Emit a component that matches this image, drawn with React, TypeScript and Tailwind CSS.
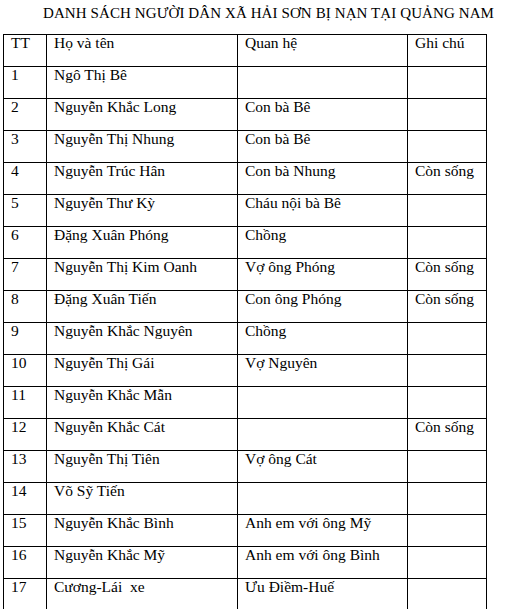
const rows: [string, string, string, string][] = [
  ['1', 'Ngô Thị Bê', '', ''],
  ['2', 'Nguyễn Khắc Long', 'Con bà Bê', ''],
  ['3', 'Nguyễn Thị Nhung', 'Con bà Bê', ''],
  ['4', 'Nguyễn Trúc Hân', 'Con bà Nhung', 'Còn sống'],
  ['5', 'Nguyễn Thư Kỳ', 'Cháu nội bà Bê', ''],
  ['6', 'Đặng Xuân Phóng', 'Chồng', ''],
  ['7', 'Nguyễn Thị Kim Oanh', 'Vợ ông Phóng', 'Còn sống'],
  ['8', 'Đặng Xuân Tiến', 'Con ông Phóng', 'Còn sống'],
  ['9', 'Nguyễn Khắc Nguyên', 'Chồng', ''],
  ['10', 'Nguyễn Thị Gái', 'Vợ Nguyên', ''],
  ['11', 'Nguyễn Khắc Mẫn', '', ''],
  ['12', 'Nguyễn Khắc Cát', '', 'Còn sống'],
  ['13', 'Nguyễn Thị Tiên', 'Vợ ông Cát', ''],
  ['14', 'Võ Sỹ Tiến', '', ''],
  ['15', 'Nguyễn Khắc Bình', 'Anh em với ông Mỹ', ''],
  ['16', 'Nguyễn Khắc Mỹ', 'Anh em với ông Bình', ''],
  ['17', 'Cương-Lái  xe', 'Ưu Điềm-Huế', ''],
]

const serif = "font-['Liberation_Serif',serif]"
const cell = `border border-black align-top px-[7px] pt-0 font-normal text-left whitespace-pre ${serif} text-[15.5px] leading-[16px]`

export default function App() {
  return (
    <div className={`w-[505px] h-[609px] bg-white text-black ${serif} overflow-hidden`}>
      <h1 className="pl-[43px] pt-[5px] h-[34px] text-[15px] leading-[16px] font-normal tracking-[0.1px]">
        DANH SÁCH NGƯỜI DÂN XÃ HẢI SƠN BỊ NẠN TẠI QUẢNG NAM
      </h1>
      <table className={`ml-[3px] border-collapse table-fixed w-[483px] ${serif}`}>
        <colgroup>
          <col className="w-[43px]" />
          <col className="w-[191px]" />
          <col className="w-[170px]" />
          <col className="w-[79px]" />
        </colgroup>
        <thead>
          <tr className="h-[32px]">
            <th className={cell}>TT</th>
            <th className={cell}>Họ và tên</th>
            <th className={cell}>Quan hệ</th>
            <th className={cell}>Ghi chú</th>
          </tr>
        </thead>
        <tbody>
          {rows.map(r => (
            <tr key={r[0]} className="h-[32px]">
              <td className={cell}>{r[0]}</td>
              <td className={cell}>{r[1]}</td>
              <td className={cell}>{r[2]}</td>
              <td className={cell}>{r[3]}</td>
            </tr>
          ))}
        </tbody>
      </table>
    </div>
  )
}
